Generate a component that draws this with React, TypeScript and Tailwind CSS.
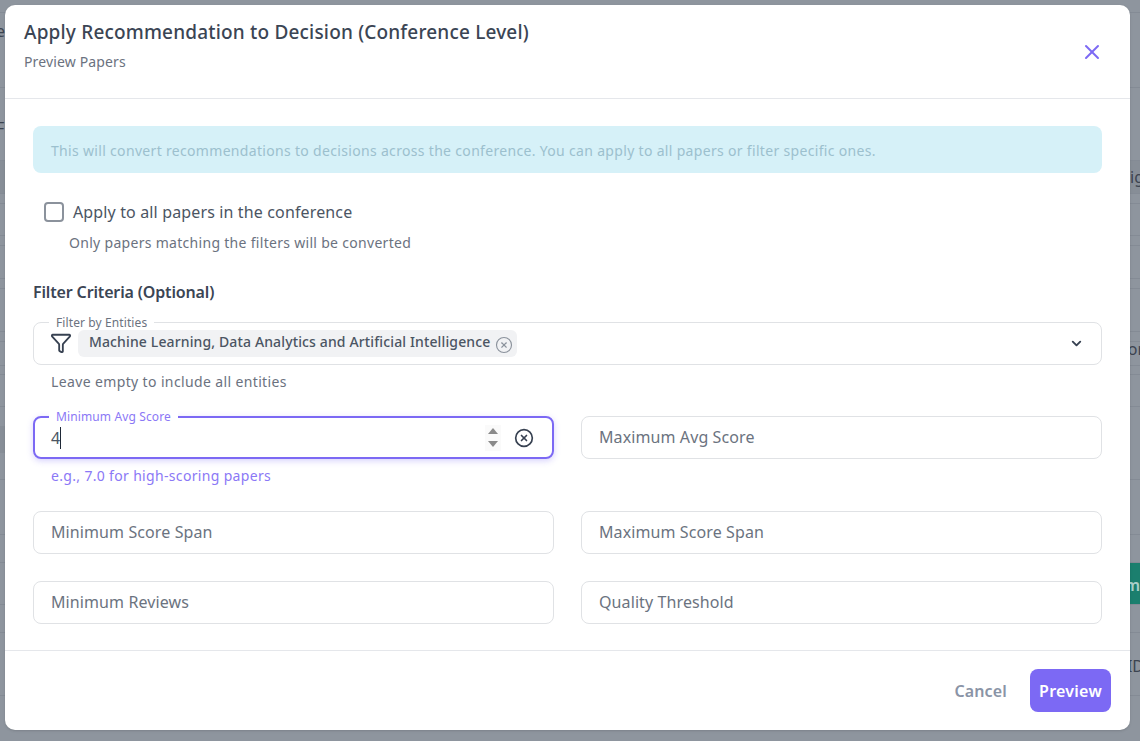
import { ChevronDown, CircleX, Filter, X } from "lucide-react";

function Field({ label }: { label: string }) {
  return (
    <div className="flex h-[42.5px] items-center rounded-lg border border-[#e0e2e5] px-[17px] text-[16px] tracking-[0.1px] text-[#6b7380]">
      {label}
    </div>
  );
}

// rows of the table behind the overlay, only their ends show beside the modal
const backgroundRows: {
  height: number;
  left?: string;
  right?: string;
  tint?: boolean;
  band?: boolean;
  button?: string;
  paddingTop?: number;
  paddingBottom?: number;
}[] = [
  { height: 13 },
  { height: 75, left: "e", paddingBottom: 39 },
  { height: 73, left: "Fi", paddingTop: 8 },
  { height: 33, right: "ig", tint: true },
  { height: 10 },
  { height: 32 },
  { height: 10 },
  { height: 33 },
  { height: 10 },
  { height: 43 },
  { height: 10 },
  { height: 24, right: "or", paddingBottom: 10 },
  { height: 9 },
  { height: 32 },
  { height: 73, band: true },
  { height: 55 },
  { height: 28 },
  { height: 42, button: "m" },
  { height: 28 },
  { height: 63, right: "ID", paddingTop: 3 },
  { height: 46 },
];

export default function App() {
  return (
    <div className="relative h-[741px] w-[1140px] overflow-hidden bg-[#8e959e] font-['Noto_Sans',sans-serif]">
      {/* Page behind the overlay */}
      <div className="flex flex-col">
        {backgroundRows.map((row, i) => (
          <div
            key={i}
            style={{ height: row.height, paddingTop: row.paddingTop, paddingBottom: row.paddingBottom }}
            className={`flex items-center justify-between overflow-hidden border-b border-[#848b95] text-[16px] leading-[20px] text-[#3c4450] ${row.tint ? "bg-[#878e97]" : ""}`}
          >
            {row.band ? (
              <span className="mb-[8px] h-[27px] w-[5px] bg-[#878e97]" />
            ) : (
              <span className="-ml-[4px]">{row.left}</span>
            )}
            {row.button ? (
              <span className="flex h-full w-[20px] items-center justify-end bg-[#1b7f6e] pt-[3px] font-semibold text-[#a9cfc8]">{row.button}</span>
            ) : (
              <span className="-mr-[4px]">{row.right}</span>
            )}
          </div>
        ))}
      </div>

      {/* Modal */}
      <div className="absolute left-[5px] top-[5px] flex h-[725px] w-[1125px] flex-col rounded-[10px] bg-white shadow-sm">
        <div className="flex h-[94px] shrink-0 items-start justify-between border-b border-[#e5e7eb] pl-[19px] pr-[26px]">
          <div className="pt-[11px]">
            <h2 className="text-[19px] font-medium leading-[32px] tracking-[0.18px] text-[#3b4554]">
              Apply Recommendation to Decision (Conference Level)
            </h2>
            <p className="mt-[4px] text-[14px] leading-[20px] tracking-[0.14px] text-[#6b7280]">Preview Papers</p>
          </div>
          <X className="mt-[35px] h-[24px] w-[24px] text-[#7c69f4]" strokeWidth={2} />
        </div>

        <div className="flex-1 px-[28px] pt-[27px]">
          <div className="flex h-[47px] items-center rounded-lg bg-[#d6f1f8] px-[18px] pt-[2px] text-[14px] tracking-[0.32px] text-[#9cc0ce]">
            This will convert recommendations to decisions across the conference. You can apply to all papers or filter specific ones.
          </div>

          <div className="mt-[29px] flex items-center pl-[11px]">
            <span className="h-[20px] w-[20px] rounded-[4px] border-2 border-[#8b929c]" />
            <span className="ml-[9px] text-[16px] leading-[20px] tracking-[0.14px] text-[#4b5563]">Apply to all papers in the conference</span>
          </div>
          <p className="mt-[11px] pl-[36px] text-[14px] leading-[20px] tracking-[0.3px] text-[#6b7280]">
            Only papers matching the filters will be converted
          </p>

          <h3 className="mt-[27px] text-[16px] font-semibold leading-[24px] tracking-[-0.15px] text-[#3b4554]">Filter Criteria (Optional)</h3>

          <div className="relative mt-[18px] flex h-[43px] items-center rounded-lg border border-[#e0e2e5] pl-[16px] pr-[17px]">
            <span className="absolute left-[15px] top-[-7px] bg-white px-[7px] text-[12px] leading-[14px] tracking-[0.1px] text-[#6b7280]">
              Filter by Entities
            </span>
            <Filter className="-mt-[1px] h-[22px] w-[22px] text-[#374151]" strokeWidth={2} />
            <div className="ml-[6px] flex h-[27px] items-center rounded-md bg-[#f1f2f4] pb-[5px] pl-[11px] pr-[4px] text-[14px] font-medium tracking-[0.13px] text-[#4b5563]">
              Machine Learning, Data Analytics and Artificial Intelligence
              <CircleX className="ml-[5px] mt-[7px] h-[18px] w-[18px] text-[#8b929c]" strokeWidth={1.5} />
            </div>
            <ChevronDown className="ml-auto h-[15px] w-[15px] text-[#374151]" strokeWidth={3} />
          </div>
          <p className="mt-[7px] pl-[18px] text-[14px] leading-[20px] tracking-[0.37px] text-[#6b7280]">Leave empty to include all entities</p>

          <div className="mt-[24px] grid grid-cols-2 gap-x-[27px]">
            <div>
              <div className="relative flex h-[43px] items-center rounded-lg border-2 border-[#7c69f4] pl-[16px] pr-[18px] shadow-[0_2px_6px_rgba(124,105,244,0.3)]">
                <span className="absolute left-[14px] top-[-8px] bg-white px-[7px] text-[12px] leading-[14px] tracking-[0.12px] text-[#8b78f6]">
                  Minimum Avg Score
                </span>
                <span className="text-[16px] text-[#4b5563]">4</span>
                <span className="h-[22px] w-px bg-[#1f2937]" />
                <div className="ml-auto flex h-[26px] w-[16px] flex-col items-center justify-center gap-[7px] bg-[#fafafa]">
                  <span className="h-0 w-0 border-x-[5px] border-b-[6px] border-x-transparent border-b-[#8a8a8a]" />
                  <span className="h-0 w-0 border-x-[5px] border-t-[6px] border-x-transparent border-t-[#8a8a8a]" />
                </div>
                <CircleX className="ml-[13px] h-[20px] w-[20px] text-[#374151]" strokeWidth={2} />
              </div>
              <p className="mt-[7px] pl-[18px] text-[14px] leading-[20px] tracking-[0.33px] text-[#8b78f6]">e.g., 7.0 for high-scoring papers</p>
            </div>
            <Field label="Maximum Avg Score" />
          </div>

          <div className="mt-[25px] grid grid-cols-2 gap-x-[27px] gap-y-[27.5px]">
            <Field label="Minimum Score Span" />
            <Field label="Maximum Score Span" />
            <Field label="Minimum Reviews" />
            <Field label="Quality Threshold" />
          </div>
        </div>

        <div className="flex h-[80px] shrink-0 items-center justify-end border-t border-[#e5e7eb] pr-[19px]">
          <button className="text-[16px] font-semibold tracking-[0.15px] text-[#8a94a6]">Cancel</button>
          <button className="ml-[23px] h-[43px] w-[81px] rounded-lg bg-[#7c69f4] text-[16px] font-semibold tracking-[0.25px] text-white">Preview</button>
        </div>
      </div>
    </div>
  );
}
